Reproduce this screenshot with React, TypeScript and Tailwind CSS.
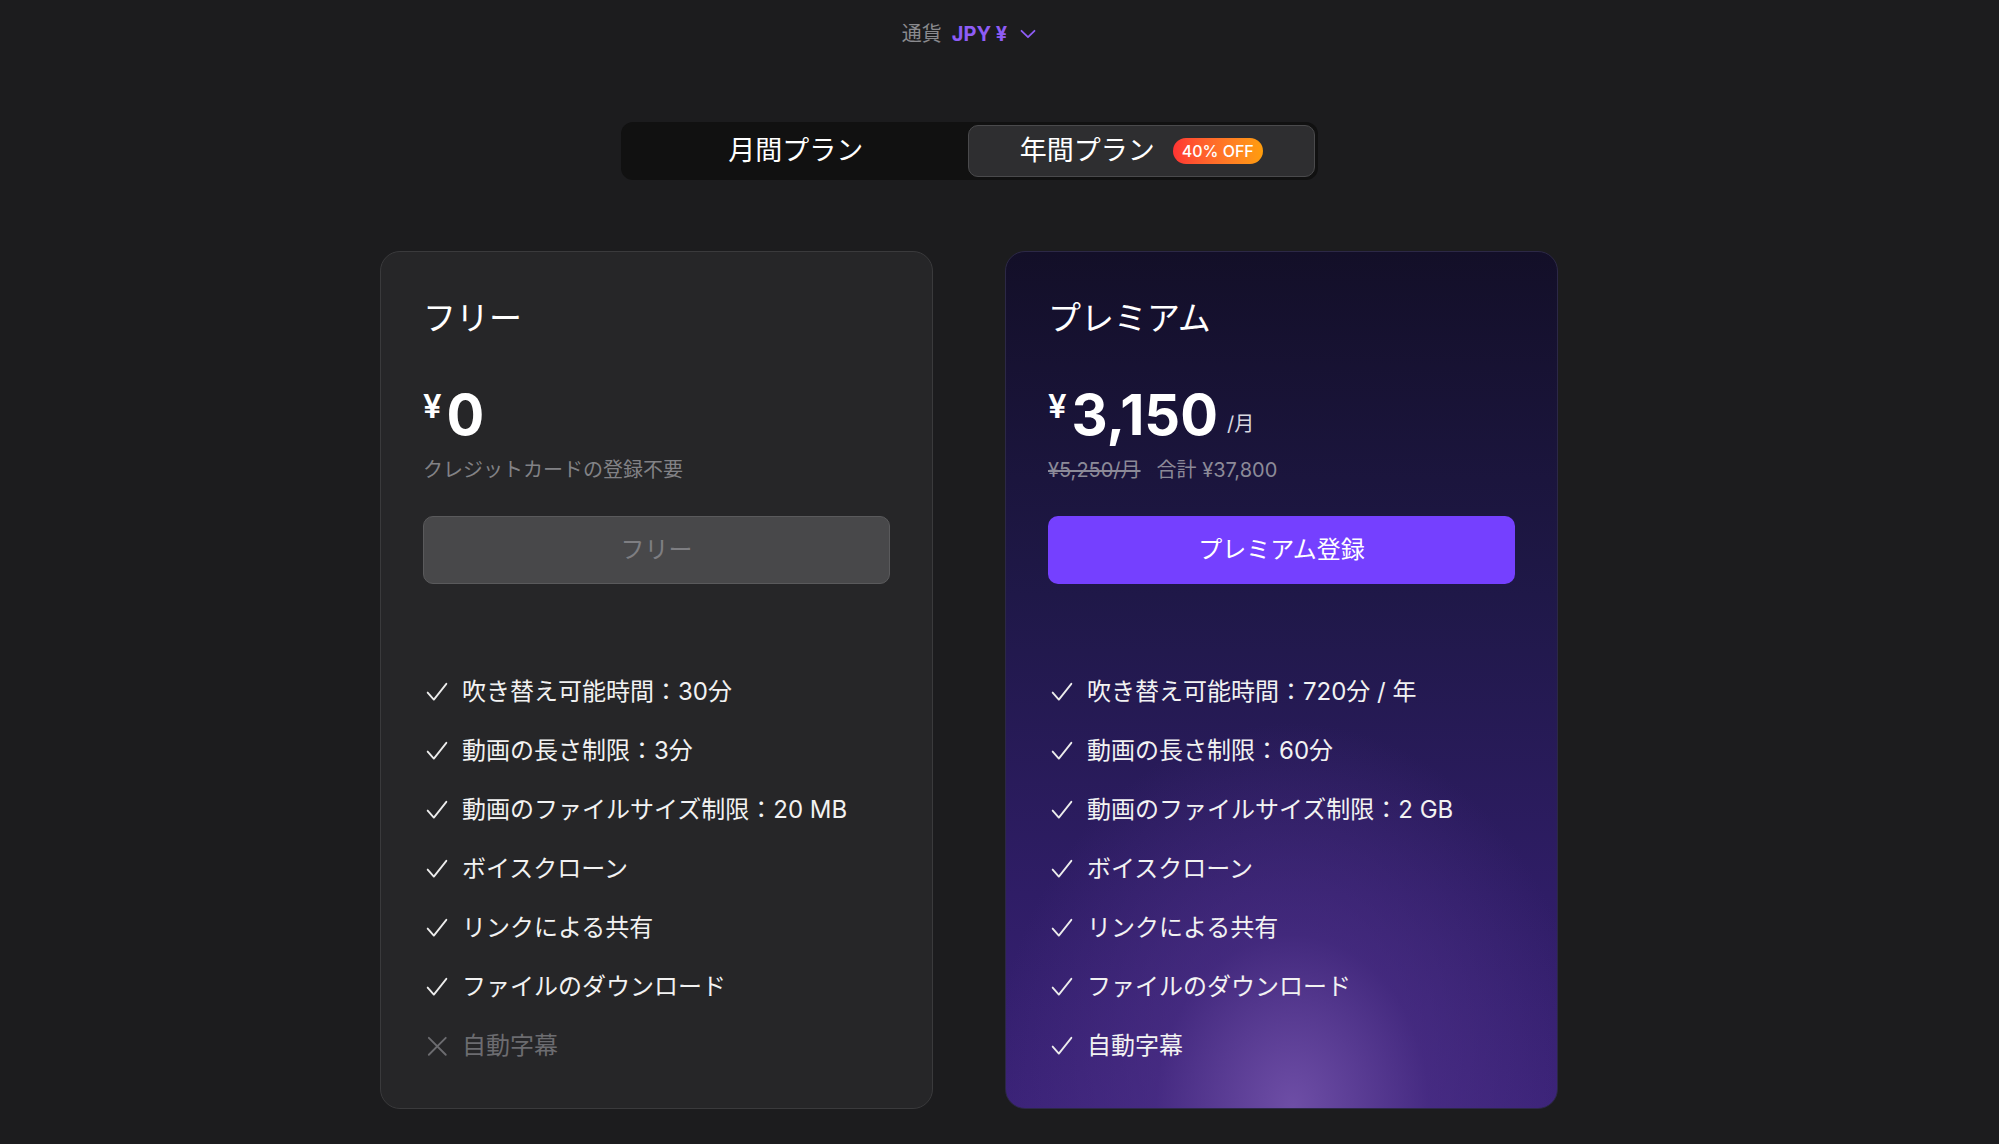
const font = "font-['Inter','Noto_Sans_CJK_JP',sans-serif]";

type Feature = { label: string; ok: boolean };

const freeFeatures: Feature[] = [
    { label: "吹き替え可能時間：30分", ok: true },
    { label: "動画の長さ制限：3分", ok: true },
    { label: "動画のファイルサイズ制限：20 MB", ok: true },
    { label: "ボイスクローン", ok: true },
    { label: "リンクによる共有", ok: true },
    { label: "ファイルのダウンロード", ok: true },
    { label: "自動字幕", ok: false },
];

const premiumFeatures: Feature[] = [
    { label: "吹き替え可能時間：720分 / 年", ok: true },
    { label: "動画の長さ制限：60分", ok: true },
    { label: "動画のファイルサイズ制限：2 GB", ok: true },
    { label: "ボイスクローン", ok: true },
    { label: "リンクによる共有", ok: true },
    { label: "ファイルのダウンロード", ok: true },
    { label: "自動字幕", ok: true },
];

const CheckIcon = () => (
    <svg width="28" height="28" viewBox="0 0 24 24" fill="none" stroke="currentColor" strokeWidth="1.6" strokeLinecap="round" strokeLinejoin="round" className="text-[#ececec] shrink-0">
        <path d="M4 12.5 9.3 18.5 20 5" />
    </svg>
);

const CrossIcon = () => (
    <svg width="28" height="28" viewBox="0 0 24 24" fill="none" stroke="currentColor" strokeWidth="1.6" strokeLinecap="round" className="text-[#6c6c70] shrink-0">
        <path d="M5 5l14.5 14.5M19.5 5 5 19.5" />
    </svg>
);

const FeatureList = ({ items }: { items: Feature[] }) => (
    <ul className="mt-[78px] flex flex-col">
        {items.map((f) => (
            <li key={f.label} className="h-[59px] flex items-center gap-[11px]">
                {f.ok ? <CheckIcon /> : <CrossIcon />}
                <span className={`text-[24px] leading-[32px] ${f.ok ? "text-[#f2f2f2]" : "text-[#6c6c70]"}`}>
                    {f.label}
                </span>
            </li>
        ))}
    </ul>
);

export default function App() {
    return (
        <div className={`min-h-[1144px] w-full bg-[#1c1c1e] ${font}`}>
            <div className="w-[1938px] flex flex-col items-center pt-[20px] pb-[35px]">
                {/* currency */}
                <div className="flex items-center h-[28px] text-[20px] leading-[28px]">
                    <span className="text-[#8a8a8e]">通貨</span>
                    <span className="ml-[10px] font-bold text-[#8e5cf6]">JPY ¥</span>
                    <svg width="16" height="10" viewBox="0 0 16 10" fill="none" stroke="currentColor" strokeWidth="1.8" strokeLinecap="round" strokeLinejoin="round" className="ml-[13px] text-[#8e5cf6]">
                        <path d="M1.5 1.8 8 8.2l6.5-6.4" />
                    </svg>
                </div>

                {/* toggle */}
                <div className="mt-[74px] w-[697px] h-[58px] p-[3px] flex bg-[#111111] rounded-[12px]">
                    <button className="flex-1 flex items-center justify-center text-[27px] font-normal text-white">
                        月間プラン
                    </button>
                    <button className="flex-1 flex items-center justify-center gap-[18px] rounded-[10px] border border-[#4a4a4c] bg-[#2e2e30] text-[27px] font-normal text-white">
                        年間プラン
                        <span className="h-[26px] px-[9px] rounded-full bg-gradient-to-r from-[#ff3333] to-[#ff9d0a] text-[16px] leading-[26px] font-medium text-white">
                            40% OFF
                        </span>
                    </button>
                </div>

                {/* cards */}
                <div className="mt-[71px] flex gap-[72px]">
                    <div className="w-[553px] h-[858px] rounded-[20px] border border-[#3a3a3c] bg-[#262628] pt-[44px] px-[42px]">
                        <h2 className="text-[33px] leading-[44px] font-normal text-white">フリー</h2>
                        <div className="mt-[49px] flex items-start text-white">
                            <span className="text-[33px] leading-[33px] font-semibold mt-[1px]">¥</span>
                            <span className="ml-[5px] text-[56px] leading-[52px] font-bold">0</span>
                        </div>
                        <p className="mt-[15px] text-[20px] leading-[28px] text-[#828286]">クレジットカードの登録不要</p>
                        <button className="mt-[32px] w-full h-[68px] rounded-[10px] border border-[#5a5a5c] bg-[#48484a] text-[24px] text-[#7e7e82]">
                            フリー
                        </button>
                        <FeatureList items={freeFeatures} />
                    </div>

                    <div className="w-[553px] h-[858px] rounded-[20px] border border-[#2c2846] bg-[image:radial-gradient(ellipse_55%_45%_at_52%_100%,#6e4ea6_0%,rgba(80,50,140,0.55)_45%,transparent_100%),linear-gradient(to_bottom,#130f28_0%,#1f1848_40%,#2f1d66_75%,#3a2277_100%)] pt-[44px] px-[42px]">
                        <h2 className="text-[33px] leading-[44px] font-normal text-white">プレミアム</h2>
                        <div className="mt-[49px] flex items-start text-white">
                            <span className="text-[33px] leading-[33px] font-semibold mt-[1px]">¥</span>
                            <span className="ml-[5px] text-[56px] leading-[52px] font-bold">3,150</span>
                            <span className="ml-[9px] mt-[25px] text-[20px] leading-[20px] text-[#d8d8e0]">/月</span>
                        </div>
                        <p className="mt-[15px] text-[20px] leading-[28px] text-[#8c8a98]">
                            <span className="line-through">¥5,250/月</span>
                            <span className="ml-[16px]">合計 ¥37,800</span>
                        </p>
                        <button className="mt-[32px] w-full h-[68px] rounded-[10px] bg-[#7540ff] text-[24px] text-white">
                            プレミアム登録
                        </button>
                        <FeatureList items={premiumFeatures} />
                    </div>
                </div>
            </div>
        </div>
    );
}
